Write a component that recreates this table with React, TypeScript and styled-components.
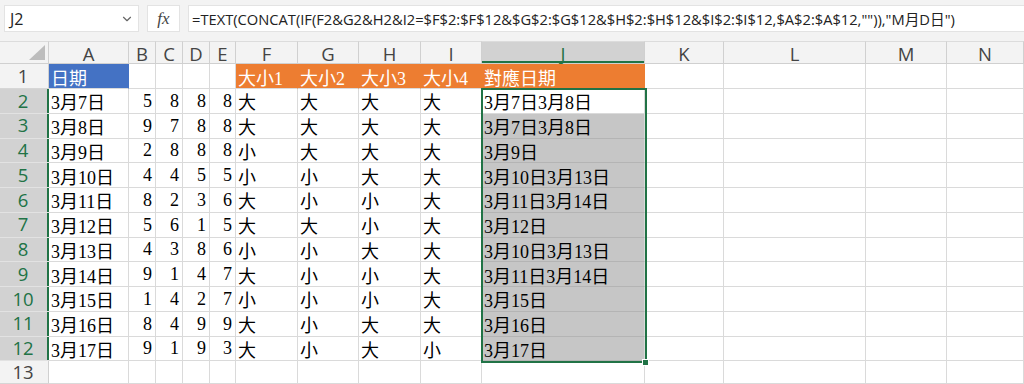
import { ChevronDown } from 'lucide-react'
import styled, { createGlobalStyle } from 'styled-components'

const UI_FONT = `"Open Sans", "Noto Sans", "Noto Sans CJK TC", sans-serif`
const CELL_FONT = `"Liberation Serif", "Noto Sans CJK TC", serif`
const GREEN = '#217346'
const GRID = '#dadada'

const GlobalStyle = createGlobalStyle`
	html, body {
		margin: 0;
		padding: 0;
		background: #fff;
	}
	body {
		width: 1024px;
		height: 384px;
		overflow: hidden;
	}
`

const Window = styled.div`
	width: 1024px;
	height: 384px;
	overflow: hidden;
	display: flex;
	flex-direction: column;
	background: #fff;
`

const FormulaBar = styled.div`
	flex: none;
	height: 41px;
	box-sizing: border-box;
	padding: 5px 0 0 4px;
	display: flex;
	align-items: flex-start;
	gap: 8px;
	background: #f3f3f3;
	font-family: ${UI_FONT};
	color: #222;
`

const NameBox = styled.div`
	width: 135px;
	height: 27px;
	box-sizing: border-box;
	padding: 0 4px 0 5px;
	display: flex;
	align-items: center;
	justify-content: space-between;
	background: #fff;
	border: 1px solid #e3e3e3;
	font-size: 16px;
`

const FxBox = styled.div`
	width: 33px;
	height: 27px;
	box-sizing: border-box;
	display: flex;
	align-items: center;
	justify-content: center;
	background: #fff;
	border: 1px solid #e3e3e3;
	font-family: 'Liberation Serif', serif;
	font-style: italic;
	font-size: 17px;
	color: #444;
`

const FormulaInput = styled.div`
	flex: 1;
	height: 27px;
	box-sizing: border-box;
	padding-left: 3px;
	display: flex;
	align-items: center;
	background: #fff;
	border: 1px solid #e3e3e3;
	border-right: none;
	font-size: 14.7px;
	white-space: nowrap;
	overflow: hidden;
`

const widths = [49, 80, 27, 27, 27, 26, 62, 61, 62, 61, 163, 79, 142, 81, 77]

const Sheet = styled.div`
	position: relative;
	display: grid;
	grid-template-columns: ${widths.map((w) => `${w}px`).join(' ')};
	grid-template-rows: 23px 25px repeat(11, 24.75px) 23px;
`

const Corner = styled.div`
	position: relative;
	box-sizing: border-box;
	background: #f3f3f3;
	border-top: 1px solid #dcdcdc;
	border-right: 1px solid #d0d0d0;
	border-bottom: 1px solid #d0d0d0;

	&::after {
		content: '';
		position: absolute;
		right: 3px;
		bottom: 3px;
		width: 0;
		height: 0;
		border-left: 16px solid transparent;
		border-bottom: 15px solid #bdbdbd;
	}
`

const ColHead = styled.div<{ $active?: boolean }>`
	box-sizing: border-box;
	display: flex;
	align-items: center;
	justify-content: center;
	background: ${(p) => (p.$active ? '#d2d2d2' : '#f3f3f3')};
	color: ${(p) => (p.$active ? GREEN : '#444')};
	border-top: 1px solid #dcdcdc;
	border-right: 1px solid #d0d0d0;
	border-bottom: 1px solid #d0d0d0;
	box-shadow: ${(p) => (p.$active ? `inset 0 -2px ${GREEN}` : 'none')};
	font-family: ${UI_FONT};
	font-size: 18.5px;
	padding-top: 1px;
`

const RowHead = styled.div<{ $active?: boolean }>`
	box-sizing: border-box;
	display: flex;
	align-items: center;
	justify-content: center;
	padding-right: 3px;
	background: ${(p) => (p.$active ? '#d2d2d2' : '#f3f3f3')};
	color: ${(p) => (p.$active ? GREEN : '#444')};
	border-bottom: 1px solid ${(p) => (p.$active ? '#e2e2e2' : '#d6d6d6')};
	box-shadow: ${(p) => (p.$active ? `inset -2px 0 ${GREEN}` : `inset -1px 0 #d0d0d0`)};
	font-family: ${UI_FONT};
	font-size: 18.5px;
	line-height: 1;
`

type Tone = 'plain' | 'blue' | 'orange' | 'picked'

const fills: Record<Tone, string> = {
	plain: '#fff',
	blue: '#4472c4',
	orange: '#ed7d31',
	picked: '#c6c6c6',
}

const Cell = styled.div<{ $tone: Tone; $right?: boolean }>`
	box-sizing: border-box;
	display: flex;
	align-items: center;
	justify-content: ${(p) => (p.$right ? 'flex-end' : 'flex-start')};
	padding: 1px 3px 0 2px;
	background: ${(p) => fills[p.$tone]};
	color: ${(p) => (p.$tone === 'blue' || p.$tone === 'orange' ? '#fff' : '#000')};
	border-right: 1px solid ${(p) => (p.$tone === 'plain' || p.$tone === 'picked' ? GRID : fills[p.$tone])};
	border-bottom: 1px solid ${(p) => (p.$tone === 'picked' ? '#b4b4b4' : GRID)};
	font-family: ${CELL_FONT};
	font-size: 18px;
	white-space: nowrap;
	overflow: hidden;
`

const Selection = styled.div`
	position: absolute;
	z-index: 1;
	left: 481px;
	top: 47px;
	width: 166px;
	height: 275px;
	box-sizing: border-box;
	border: 2px solid ${GREEN};
	pointer-events: none;
`

const FillHandle = styled.div`
	position: absolute;
	z-index: 2;
	left: 642px;
	top: 318px;
	width: 7px;
	height: 7px;
	box-sizing: border-box;
	background: ${GREEN};
	border: 1px solid #fff;
`

const letters = ['A', 'B', 'C', 'D', 'E', 'F', 'G', 'H', 'I', 'J', 'K', 'L', 'M', 'N']

const rows: [string, number, number, number, number, string, string, string, string, string][] = [
	['3月7日', 5, 8, 8, 8, '大', '大', '大', '大', '3月7日3月8日'],
	['3月8日', 9, 7, 8, 8, '大', '大', '大', '大', '3月7日3月8日'],
	['3月9日', 2, 8, 8, 8, '小', '大', '大', '大', '3月9日'],
	['3月10日', 4, 4, 5, 5, '小', '小', '大', '大', '3月10日3月13日'],
	['3月11日', 8, 2, 3, 6, '大', '小', '小', '大', '3月11日3月14日'],
	['3月12日', 5, 6, 1, 5, '大', '大', '小', '大', '3月12日'],
	['3月13日', 4, 3, 8, 6, '小', '小', '大', '大', '3月10日3月13日'],
	['3月14日', 9, 1, 4, 7, '大', '小', '小', '大', '3月11日3月14日'],
	['3月15日', 1, 4, 2, 7, '小', '小', '小', '大', '3月15日'],
	['3月16日', 8, 4, 9, 9, '大', '小', '大', '大', '3月16日'],
	['3月17日', 9, 1, 9, 3, '大', '小', '大', '小', '3月17日'],
]

const headerRow: { text: string; tone: Tone }[] = [
	{ text: '日期', tone: 'blue' },
	{ text: '', tone: 'plain' },
	{ text: '', tone: 'plain' },
	{ text: '', tone: 'plain' },
	{ text: '', tone: 'plain' },
	{ text: '大小1', tone: 'orange' },
	{ text: '大小2', tone: 'orange' },
	{ text: '大小3', tone: 'orange' },
	{ text: '大小4', tone: 'orange' },
	{ text: '對應日期', tone: 'orange' },
	{ text: '', tone: 'plain' },
	{ text: '', tone: 'plain' },
	{ text: '', tone: 'plain' },
	{ text: '', tone: 'plain' },
]

const formula =
	'=TEXT(CONCAT(IF(F2&G2&H2&I2=$F$2:$F$12&$G$2:$G$12&$H$2:$H$12&$I$2:$I$12,$A$2:$A$12,"")),"M月D日")'

export default function App() {
	return (
		<Window>
			<GlobalStyle />
			<FormulaBar>
				<NameBox>
					<span>J2</span>
					<ChevronDown size={14} color="#666" />
				</NameBox>
				<FxBox>fx</FxBox>
				<FormulaInput>{formula}</FormulaInput>
			</FormulaBar>
			<Sheet>
				<Corner />
				{letters.map((l) => (
					<ColHead key={l} $active={l === 'J'}>
						{l}
					</ColHead>
				))}

				<RowHead>1</RowHead>
				{headerRow.map((c, i) => (
					<Cell key={i} $tone={c.tone}>
						{c.text}
					</Cell>
				))}

				{rows.map((r, i) => (
					<Row key={i} n={i + 2} data={r} />
				))}

				<RowHead>13</RowHead>
				{letters.map((l) => (
					<Cell key={l} $tone="plain" />
				))}

				<Selection />
				<FillHandle />
			</Sheet>
		</Window>
	)
}

const Row = ({ n, data }: { n: number; data: (typeof rows)[number] }) => {
	const [date, b, c, d, e, f, g, h, i, j] = data
	return (
		<>
			<RowHead $active>{n}</RowHead>
			<Cell $tone="plain">{date}</Cell>
			{[b, c, d, e].map((v, k) => (
				<Cell key={k} $tone="plain" $right>
					{v}
				</Cell>
			))}
			{[f, g, h, i].map((v, k) => (
				<Cell key={k} $tone="plain">
					{v}
				</Cell>
			))}
			<Cell $tone={n === 2 ? 'plain' : 'picked'}>{j}</Cell>
			{[0, 1, 2, 3].map((k) => (
				<Cell key={k} $tone="plain" />
			))}
		</>
	)
}
